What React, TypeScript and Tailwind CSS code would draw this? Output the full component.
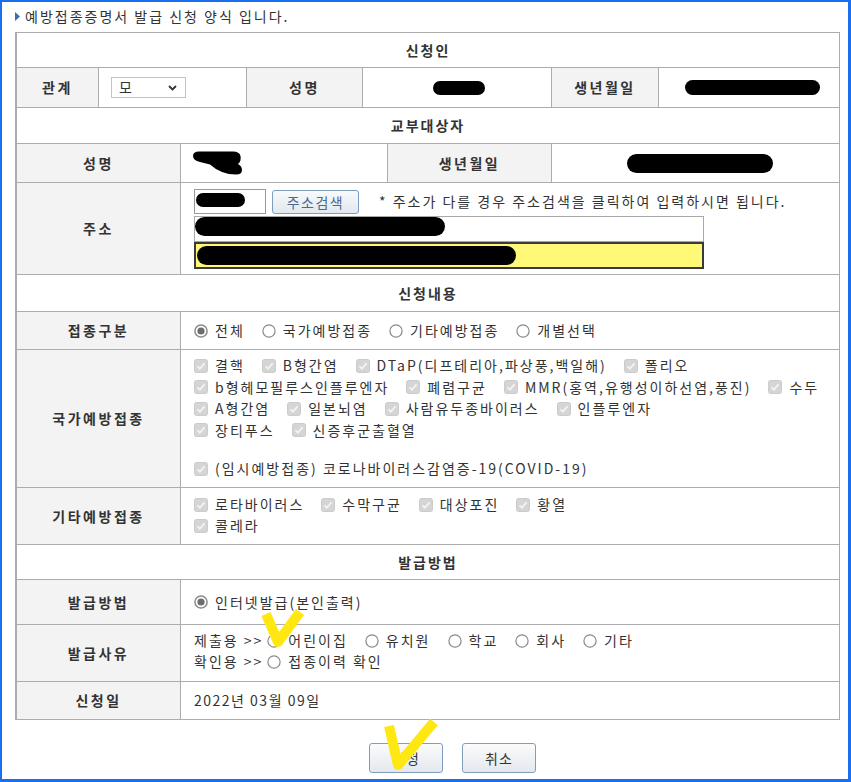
import React from 'react';

const font = "font-['Noto_Sans_CJK_KR','Noto_Sans',sans-serif]";

const Check: React.FC = () => (
  <svg width="14" height="14" viewBox="0 0 14 14" className="shrink-0">
    <rect x="0.5" y="0.5" width="13" height="13" rx="2" fill="#d5d5d5" stroke="#cbcbcb" />
    <path d="M3.4 7.3 L5.9 9.7 L10.6 4.4" fill="none" stroke="#f3f3f3" strokeWidth="1.8" />
  </svg>
);

const Radio: React.FC<{ on?: boolean }> = ({ on }) => (
  <svg width="14" height="14" viewBox="0 0 14 14" className="shrink-0">
    <circle cx="7" cy="7" r="6.1" fill="#fff" stroke="#8a8a8a" strokeWidth={on ? 1.5 : 1.2} />
    {on && <circle cx="7" cy="7" r="3.6" fill="#6d6d6d" />}
  </svg>
);

const CheckItem: React.FC<{ label: string }> = ({ label }) => (
  <span className="inline-flex items-center mr-[17px]">
    <Check />
    <span className="ml-[7px]">{label}</span>
  </span>
);

const RadioItem: React.FC<{ label: string; on?: boolean }> = ({ label, on }) => (
  <span className="inline-flex items-center mr-[17px]">
    <Radio on={on} />
    <span className="ml-[7px]">{label}</span>
  </span>
);

// 회색 라벨 칸
const Label: React.FC<{ children: React.ReactNode; w?: string }> = ({ children, w = 'w-[164px]' }) => (
  <div className={`${w} shrink-0 self-stretch bg-[#f3f3f3] border-r border-[#acacac] flex items-center justify-center font-bold tracking-[2.5px] text-[#333]`}>
    {children}
  </div>
);

const Section: React.FC<{ title: string; h: string }> = ({ title, h }) => (
  <div className={`${h} border-b border-[#acacac] flex items-center justify-center font-bold tracking-[2px] text-[#333]`}>
    {title}
  </div>
);

const App: React.FC = () => {
  return (
    <div className={`${font} w-[851px] h-[782px] bg-white border-[#1a6ff0] border-t-2 border-l-2 border-r-[3px] border-b-[3px] relative overflow-hidden text-[14px] text-[#333] tracking-[2px]`}>
      {/* 안내 문구 */}
      <div className="h-[30px] flex items-center pl-[13px] pb-[2px]">
        <svg width="5" height="9" viewBox="0 0 5 9" className="shrink-0">
          <polygon points="0,0 5,4.5 0,9" fill="#3d6db3" />
        </svg>
        <span className="ml-[5px]">예방접종증명서 발급 신청 양식 입니다.</span>
      </div>

      <div className="ml-[13px] w-[825px] border-t border-r border-l-2 border-[#acacac]">
        <Section title="신청인" h="h-[35px]" />

        <div className="h-[40px] flex border-b border-[#acacac]">
          <Label w="w-[82px]">관계</Label>
          <div className="w-[148px] shrink-0 border-r border-[#acacac] flex items-center pl-[12px]">
            <div className="w-[75px] h-[21px] border border-[#c3c3c3] flex items-center justify-between pl-[7px] pr-[8px]">
              <span>모</span>
              <svg width="9" height="6" viewBox="0 0 9 6">
                <polyline points="1,1 4.5,4.5 8,1" fill="none" stroke="#333" strokeWidth="1.8" />
              </svg>
            </div>
          </div>
          <Label w="w-[116px]">성명</Label>
          <div className="w-[189px] shrink-0 border-r border-[#acacac] flex items-center justify-center">
            <div className="w-[52px] h-[14px] rounded-full bg-black ml-[4px]" />
          </div>
          <Label w="w-[107px]">생년월일</Label>
          <div className="flex-1 flex items-center justify-center">
            <div className="w-[135px] h-[15px] rounded-full bg-black ml-[6px]" />
          </div>
        </div>

        <Section title="교부대상자" h="h-[36px]" />

        <div className="h-[39px] flex border-b border-[#acacac]">
          <Label>성명</Label>
          <div className="w-[207px] shrink-0 border-r border-[#acacac] flex items-center pl-[12px]">
            <svg width="50" height="24" viewBox="0 0 50 24">
              <path d="M6 0.5 Q0 0.5 0 5 Q0 9.5 7 11 L17 13.5 Q28 23.5 43 23.5 Q49 23.5 49 19 Q49 15 45 13 Q48.5 10 47.5 5 Q46.5 0.5 40 0.5 Z" fill="#000" />
            </svg>
          </div>
          <Label>생년월일</Label>
          <div className="flex-1 flex items-center pl-[75px]">
            <div className="w-[146px] h-[19px] rounded-full bg-black" />
          </div>
        </div>

        <div className="h-[92px] flex border-b border-[#acacac]">
          <Label>주소</Label>
          <div className="pl-[13px] pt-[6px]">
            <div className="flex items-center whitespace-nowrap">
              <div className="w-[72px] h-[25px] border border-[#9a9a9a] pt-[3px] pl-[1px]">
                <div className="w-[49px] h-[14px] rounded-full bg-black" />
              </div>
              <button className="ml-[6px] w-[87px] h-[24px] rounded-[3px] border border-[#7f9dbf] bg-linear-to-b from-[#f8fafc] to-[#e2e8ef] text-[#4a6890] tracking-[1.5px] leading-none">
                주소검색
              </button>
              <span className="ml-[20px]">* 주소가 다를 경우 주소검색을 클릭하여 입력하시면 됩니다.</span>
            </div>
            <div className="w-[510px] h-[26px] mt-[2px] border border-[#a8a8a8] bg-white">
              <div className="w-[250px] h-[19px] rounded-full bg-black" />
            </div>
            <div className="w-[510px] h-[27px] border-2 border-[#3a3a3a] bg-[#fff977] flex items-center pl-[1px]">
              <div className="w-[319px] h-[19px] rounded-full bg-black" />
            </div>
          </div>
        </div>

        <Section title="신청내용" h="h-[37px]" />

        <div className="h-[38px] flex border-b border-[#acacac]">
          <Label>접종구분</Label>
          <div className="flex items-center pl-[13px] whitespace-nowrap">
            <RadioItem label="전체" on />
            <RadioItem label="국가예방접종" />
            <RadioItem label="기타예방접종" />
            <RadioItem label="개별선택" />
          </div>
        </div>

        <div className="h-[138px] flex border-b border-[#acacac]">
          <Label>국가예방접종</Label>
          <div className="pl-[13px] pt-[5px] leading-[21.5px] whitespace-nowrap">
            <div className="flex items-center">
              <CheckItem label="결핵" />
              <CheckItem label="B형간염" />
              <CheckItem label="DTaP(디프테리아,파상풍,백일해)" />
              <CheckItem label="폴리오" />
            </div>
            <div className="flex items-center">
              <CheckItem label="b형헤모필루스인플루엔자" />
              <CheckItem label="폐렴구균" />
              <CheckItem label="MMR(홍역,유행성이하선염,풍진)" />
              <CheckItem label="수두" />
            </div>
            <div className="flex items-center">
              <CheckItem label="A형간염" />
              <CheckItem label="일본뇌염" />
              <CheckItem label="사람유두종바이러스" />
              <CheckItem label="인플루엔자" />
            </div>
            <div className="flex items-center">
              <CheckItem label="장티푸스" />
              <CheckItem label="신증후군출혈열" />
            </div>
            <div className="flex items-center mt-[17px]">
              <CheckItem label="(임시예방접종) 코로나바이러스감염증-19(COVID-19)" />
            </div>
          </div>
        </div>

        <div className="h-[57px] flex border-b border-[#acacac]">
          <Label>기타예방접종</Label>
          <div className="pl-[13px] pt-[6px] leading-[21px] whitespace-nowrap">
            <div className="flex items-center">
              <CheckItem label="로타바이러스" />
              <CheckItem label="수막구균" />
              <CheckItem label="대상포진" />
              <CheckItem label="황열" />
            </div>
            <div className="flex items-center">
              <CheckItem label="콜레라" />
            </div>
          </div>
        </div>

        <Section title="발급방법" h="h-[35px]" />

        <div className="h-[45px] flex border-b border-[#acacac]">
          <Label>발급방법</Label>
          <div className="flex items-center pl-[13px]">
            <RadioItem label="인터넷발급(본인출력)" on />
          </div>
        </div>

        <div className="h-[57px] flex border-b border-[#acacac]">
          <Label>발급사유</Label>
          <div className="pl-[13px] pt-[5px] leading-[21px] whitespace-nowrap">
            <div className="flex items-center">
              <span className="mr-[4px]">제출용 &gt;&gt;</span>
              <RadioItem label="어린이집" />
              <RadioItem label="유치원" />
              <RadioItem label="학교" />
              <RadioItem label="회사" />
              <RadioItem label="기타" />
            </div>
            <div className="flex items-center">
              <span className="mr-[4px]">확인용 &gt;&gt;</span>
              <RadioItem label="접종이력 확인" />
            </div>
          </div>
        </div>

        <div className="h-[38px] flex border-b border-[#acacac]">
          <Label>신청일</Label>
          <div className="flex items-center pl-[13px] tracking-[1.5px]">2022년 03월 09일</div>
        </div>
      </div>

      <div className="flex gap-[19px] ml-[367px] mt-[23px]">
        <button className="w-[74px] h-[30px] rounded-[3px] border border-[#7f9dbf] bg-linear-to-b from-[#fafbfc] to-[#e4e8ee] text-[#333] tracking-[1px]">신청</button>
        <button className="w-[74px] h-[30px] rounded-[3px] border border-[#7f9dbf] bg-linear-to-b from-[#fafbfc] to-[#e4e8ee] text-[#333] tracking-[1px]">취소</button>
      </div>

      {/* 노란 체크 표시 (덧그림) */}
      <svg className="absolute left-[-2px] top-[-2px] pointer-events-none" width="851" height="782" viewBox="0 0 851 782">
        <polyline points="266,614 278,642 300,612" fill="none" stroke="#ffe712" strokeWidth="10" strokeLinejoin="round" />
        <polyline points="389,726 398,765 434,722" fill="none" stroke="#ffe712" strokeWidth="10" strokeLinejoin="round" />
      </svg>
    </div>
  );
};

export default App;
